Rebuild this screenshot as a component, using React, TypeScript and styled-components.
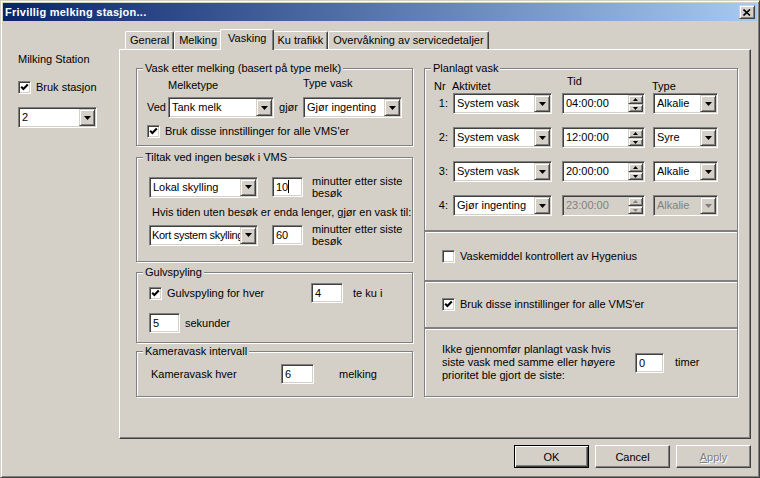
import React from "react";
import styled, { createGlobalStyle, css } from "styled-components";

const face = "#D4D0C8";
const shadow = "#808080";
const dark = "#404040";

const GlobalStyle = createGlobalStyle`
  html, body {
    margin: 0;
    padding: 0;
    background: ${face};
  }
  body {
    font-family: "Liberation Sans", Arial, sans-serif;
    font-size: 11px;
    color: #000;
  }
  * {
    box-sizing: border-box;
  }
`;

const raised = css`
  border: 1px solid;
  border-color: ${face} ${dark} ${dark} ${face};
  box-shadow: inset 1px 1px 0 #fff, inset -1px -1px 0 ${shadow};
  background: ${face};
`;

const sunken = css`
  border: 1px solid;
  border-color: ${shadow} #fff #fff ${shadow};
  box-shadow: inset 1px 1px 0 ${dark}, inset -1px -1px 0 ${face};
`;

const etched = css`
  border: 1px solid ${shadow};
  box-shadow: inset 1px 1px 0 #fff, 1px 1px 0 #fff;
`;

const Window = styled.div`
  width: 760px;
  height: 478px;
  background: ${face};
  border: 1px solid;
  border-color: ${face} ${dark} ${dark} ${face};
  box-shadow: inset 1px 1px 0 #fff, inset -1px -1px 0 ${shadow};
  padding: 2px;
  display: flex;
  flex-direction: column;
`;

const TitleBar = styled.div`
  height: 18px;
  display: flex;
  align-items: center;
  justify-content: space-between;
  padding: 0 2px;
  background: linear-gradient(90deg, #0a246a, #a6caf0);
`;

const Title = styled.span`
  color: #fff;
  font-weight: bold;
  letter-spacing: 0.25px;
`;

const CloseButton = styled.span`
  ${raised};
  width: 16px;
  height: 14px;
  display: flex;
  align-items: center;
  justify-content: center;
`;

const Body = styled.div`
  flex: 1;
  display: flex;
  flex-direction: column;
  padding: 8px 6px 0 15px;
`;

const MainRow = styled.div`
  display: flex;
  align-items: flex-start;
`;

const SideColumn = styled.div`
  width: 101px;
  padding-top: 24px;
  display: flex;
  flex-direction: column;
  align-items: flex-start;
`;

const Text = styled.span`
  line-height: 13px;
  white-space: nowrap;
`;

const CheckLabel = styled.label<{ $mt?: number }>`
  display: flex;
  align-items: center;
  gap: 5px;
  margin-top: ${(p) => p.$mt ?? 0}px;
  line-height: 13px;
  white-space: nowrap;
`;

const Box = styled.span`
  ${sunken};
  width: 13px;
  height: 13px;
  background: #fff;
  display: inline-flex;
  align-items: center;
  justify-content: center;
  flex-shrink: 0;
`;

const TabControl = styled.div`
  width: 632px;
  display: flex;
  flex-direction: column;
`;

const TabStrip = styled.div`
  height: 20px;
  display: flex;
  align-items: flex-end;
  padding-left: 6px;
`;

const Tab = styled.div<{ $active?: boolean }>`
  position: relative;
  z-index: ${(p) => (p.$active ? 1 : 0)};
  height: ${(p) => (p.$active ? 21 : 18)}px;
  padding: 0 ${(p) => (p.$active ? 7 : 4)}px;
  margin: 0 ${(p) => (p.$active ? -2 : 0)}px ${(p) => (p.$active ? -1 : 0)}px;
  background: ${face};
  border-top: 1px solid #fff;
  border-left: 1px solid #fff;
  border-right: 1px solid ${dark};
  border-radius: 2px 2px 0 0;
  box-shadow: inset -1px 0 0 ${shadow};
  line-height: 16px;
  white-space: nowrap;
`;

const TabPanel = styled.div`
  height: 390px;
  border: 1px solid;
  border-color: #fff ${dark} ${dark} #fff;
  box-shadow: inset -1px -1px 0 ${shadow};
  padding: 12px 0 0 16px;
  display: flex;
  gap: 11px;
`;

const Column = styled.div<{ $w: number }>`
  width: ${(p) => p.$w}px;
  display: flex;
  flex-direction: column;
`;

const GroupBox = styled.fieldset<{ $h: number; $mt?: number }>`
  margin: ${(p) => p.$mt ?? 0}px 0 0;
  padding: 0;
  min-width: 0;
  height: ${(p) => p.$h}px;
  ${etched};
`;

const Caption = styled.legend`
  margin-left: 6px;
  padding: 0 2px;
  line-height: 13px;
  background: ${face};
  white-space: nowrap;
`;

const PlainBox = styled.div<{ $h: number }>`
  height: ${(p) => p.$h}px;
  ${etched};
  display: flex;
  align-items: center;
  padding-left: 17px;
`;

const Inner = styled.div<{ $pt: number; $pl: number }>`
  padding: ${(p) => p.$pt}px 0 0 ${(p) => p.$pl}px;
`;

const TypeGrid = styled.div`
  display: grid;
  grid-template-columns: 21px 106px 29px 99px;
  grid-template-rows: 15px 21px;
  row-gap: 5px;
  align-items: center;
`;

const HeadLabel = styled.span<{ $col: number; $top?: boolean; $shift?: number }>`
  grid-column: ${(p) => p.$col};
  align-self: ${(p) => (p.$top ? "start" : "end")};
  margin-left: ${(p) => p.$shift ?? 0}px;
  line-height: 13px;
  white-space: nowrap;
`;

const Centered = styled.span`
  justify-self: center;
  line-height: 13px;
`;

const Row = styled.div<{ $mt?: number }>`
  display: flex;
  align-items: center;
  margin-top: ${(p) => p.$mt ?? 0}px;
`;

const Spaced = styled.span<{ $ml?: number; $w?: number }>`
  margin-left: ${(p) => p.$ml ?? 0}px;
  width: ${(p) => (p.$w ? `${p.$w}px` : "auto")};
  flex-shrink: 0;
  line-height: 13px;
  white-space: nowrap;
`;

const Note = styled.span<{ $ml: number; $w: number; $lh?: number }>`
  margin-left: ${(p) => p.$ml}px;
  width: ${(p) => p.$w}px;
  line-height: ${(p) => p.$lh ?? 12}px;
`;

const ComboBox = styled.div<{ $w: number; $disabled?: boolean }>`
  ${sunken};
  width: ${(p) => p.$w}px;
  height: 21px;
  padding: 1px;
  display: flex;
  align-items: center;
  flex-shrink: 0;
  background: ${(p) => (p.$disabled ? face : "#fff")};
  color: ${(p) => (p.$disabled ? shadow : "#000")};
`;

const ComboText = styled.span<{ $tight?: boolean }>`
  flex: 1;
  min-width: 0;
  padding-left: ${(p) => (p.$tight ? 1 : 2)}px;
  letter-spacing: ${(p) => (p.$tight ? "-0.3px" : "0")};
  overflow: hidden;
  white-space: nowrap;
  text-overflow: clip;
  line-height: 17px;
`;

const ArrowButton = styled.span`
  ${raised};
  width: 16px;
  height: 17px;
  flex-shrink: 0;
  display: flex;
  align-items: center;
  justify-content: center;
`;

const Edit = styled.div<{ $w: number }>`
  ${sunken};
  width: ${(p) => p.$w}px;
  height: 20px;
  flex-shrink: 0;
  background: #fff;
  padding: 0 3px;
  line-height: 18px;
  white-space: nowrap;
`;

const Caret = styled.span`
  display: inline-block;
  width: 1px;
  height: 13px;
  background: #000;
  vertical-align: -2px;
`;

const SpinBox = styled.div<{ $disabled?: boolean }>`
  ${sunken};
  width: 83px;
  height: 21px;
  padding: 1px;
  display: flex;
  background: ${(p) => (p.$disabled ? face : "#fff")};
  color: ${(p) => (p.$disabled ? shadow : "#000")};
`;

const SpinButtons = styled.div`
  width: 15px;
  display: flex;
  flex-direction: column;
`;

const SpinButton = styled.span<{ $h: number }>`
  ${raised};
  height: ${(p) => p.$h}px;
  display: flex;
  align-items: center;
  justify-content: center;
`;

const HeaderGrid = styled.div`
  display: grid;
  grid-template-columns: 19px 109px 91px 65px;
  height: 18px;
`;

const ScheduleGrid = styled.div`
  display: grid;
  grid-template-columns: 19px 109px 91px 65px;
  grid-auto-rows: 21px;
  row-gap: 13px;
  align-items: center;
`;

const RowNumber = styled.span`
  justify-self: end;
  padding-right: 5px;
  line-height: 13px;
`;

const ButtonRow = styled.div`
  display: flex;
  justify-content: flex-end;
  gap: 6px;
  margin-top: 6px;
`;

const PushButton = styled.button<{ $default?: boolean }>`
  width: 75px;
  height: 23px;
  padding: 0;
  font: inherit;
  color: #000;
  background: ${face};
  border: 1px solid;
  border-color: #fff ${dark} ${dark} #fff;
  box-shadow: inset -1px -1px 0 ${shadow}, inset 1px 1px 0 ${face};
  ${(p) =>
    p.$default &&
    css`
      border-color: #000;
      box-shadow: inset 1px 1px 0 #fff, inset -1px -1px 0 ${dark}, inset -2px -2px 0 ${shadow};
    `}
  &:disabled {
    color: ${shadow};
    text-shadow: 1px 1px 0 #fff;
  }
`;

function CheckMark() {
  return (
    <svg width="9" height="9" viewBox="0 0 9 9">
      <polyline points="1.2,3.8 3.4,6 7.8,1.6" fill="none" stroke="#000" strokeWidth="2.1" />
    </svg>
  );
}

function Check({ checked, label, mt }: { checked?: boolean; label: string; mt?: number }) {
  return (
    <CheckLabel $mt={mt}>
      <Box>{checked && <CheckMark />}</Box>
      {label}
    </CheckLabel>
  );
}

function DownArrow({ disabled }: { disabled?: boolean }) {
  return (
    <svg width="7" height="4" viewBox="0 0 7 4">
      <polygon points="0,0 7,0 3.5,4" fill={disabled ? shadow : "#000"} />
    </svg>
  );
}

function Combo({ w, value, disabled, tight }: { w: number; value: string; disabled?: boolean; tight?: boolean }) {
  return (
    <ComboBox $w={w} $disabled={disabled}>
      <ComboText $tight={tight}>{value}</ComboText>
      <ArrowButton>
        <DownArrow disabled={disabled} />
      </ArrowButton>
    </ComboBox>
  );
}

function Spin({ value, disabled }: { value: string; disabled?: boolean }) {
  const c = disabled ? shadow : "#000";
  return (
    <SpinBox $disabled={disabled}>
      <ComboText>{value}</ComboText>
      <SpinButtons>
        <SpinButton $h={9}>
          <svg width="5" height="3" viewBox="0 0 5 3">
            <polygon points="0,3 5,3 2.5,0" fill={c} />
          </svg>
        </SpinButton>
        <SpinButton $h={8}>
          <svg width="5" height="3" viewBox="0 0 5 3">
            <polygon points="0,0 5,0 2.5,3" fill={c} />
          </svg>
        </SpinButton>
      </SpinButtons>
    </SpinBox>
  );
}

const schedule = [
  { nr: "1:", act: "System vask", time: "04:00:00", type: "Alkalie" },
  { nr: "2:", act: "System vask", time: "12:00:00", type: "Syre" },
  { nr: "3:", act: "System vask", time: "20:00:00", type: "Alkalie" },
  { nr: "4:", act: "Gjør ingenting", time: "23:00:00", type: "Alkalie", disabled: true },
];

const tabs = ["General", "Melking", "Vasking", "Ku trafikk", "Overvåkning av servicedetaljer"];

export default function App() {
  return (
    <>
      <GlobalStyle />
      <Window>
        <TitleBar>
          <Title>Frivillig melking stasjon...</Title>
          <CloseButton>
            <svg width="8" height="7" viewBox="0 0 8 7">
              <path d="M0.5 0.5 L7 6.5 M7 0.5 L0.5 6.5" stroke="#000" strokeWidth="1.6" />
            </svg>
          </CloseButton>
        </TitleBar>
        <Body>
          <MainRow>
            <SideColumn>
              <Text>Milking Station</Text>
              <Check checked label="Bruk stasjon" mt={15} />
              <Row $mt={13}>
                <Combo w={79} value="2" />
              </Row>
            </SideColumn>
            <TabControl>
              <TabStrip>
                {tabs.map((t) => (
                  <Tab key={t} $active={t === "Vasking"}>
                    {t}
                  </Tab>
                ))}
              </TabStrip>
              <TabPanel>
                <Column $w={277}>
                  <GroupBox $h={84}>
                    <Caption>Vask etter melking (basert på type melk)</Caption>
                    <Inner $pt={2} $pl={10}>
                      <TypeGrid>
                        <HeadLabel $col={2}>Melketype</HeadLabel>
                        <HeadLabel $col={4} $top>
                          Type vask
                        </HeadLabel>
                        <Text>Ved</Text>
                        <Combo w={106} value="Tank melk" />
                        <Centered>gjør</Centered>
                        <Combo w={99} value="Gjør ingenting" />
                      </TypeGrid>
                      <Check checked label="Bruk disse innstillinger for alle VMS'er" mt={7} />
                    </Inner>
                  </GroupBox>
                  <GroupBox $h={111} $mt={5}>
                    <Caption>Tiltak ved ingen besøk i VMS</Caption>
                    <Inner $pt={11} $pl={12}>
                      <Row>
                        <Combo w={109} value="Lokal skylling" />
                        <Spaced $ml={14}>
                          <Edit $w={31}>
                            10
                            <Caret />
                          </Edit>
                        </Spaced>
                        <Note $ml={9} $w={98}>
                          minutter etter siste besøk
                        </Note>
                      </Row>
                      <Row $mt={7}>
                        <Spaced $ml={3}>Hvis tiden uten besøk er enda lenger, gjør en vask til:</Spaced>
                      </Row>
                      <Row $mt={4}>
                        <Combo w={109} value="Kort system skylling" tight />
                        <Spaced $ml={14}>
                          <Edit $w={31}>60</Edit>
                        </Spaced>
                        <Note $ml={9} $w={98}>
                          minutter etter siste besøk
                        </Note>
                      </Row>
                    </Inner>
                  </GroupBox>
                  <GroupBox $h={77} $mt={4}>
                    <Caption>Gulvspyling</Caption>
                    <Inner $pt={4} $pl={12}>
                      <Row>
                        <Spaced $w={162}>
                          <Check checked label="Gulvspyling for hver" />
                        </Spaced>
                        <Edit $w={32}>4</Edit>
                        <Spaced $ml={10}>te ku i</Spaced>
                      </Row>
                      <Row $mt={10}>
                        <Edit $w={31}>5</Edit>
                        <Spaced $ml={5}>sekunder</Spaced>
                      </Row>
                    </Inner>
                  </GroupBox>
                  <GroupBox $h={52} $mt={2}>
                    <Caption>Kameravask intervall</Caption>
                    <Inner $pt={6} $pl={14}>
                      <Row>
                        <Spaced $w={130}>Kameravask hver</Spaced>
                        <Edit $w={33}>6</Edit>
                        <Spaced $ml={25}>melking</Spaced>
                      </Row>
                    </Inner>
                  </GroupBox>
                </Column>
                <Column $w={314}>
                  <GroupBox $h={169}>
                    <Caption>Planlagt vask</Caption>
                    <Inner $pt={0} $pl={9}>
                      <HeaderGrid>
                        <HeadLabel $col={1}>Nr</HeadLabel>
                        <HeadLabel $col={2} $shift={-1}>
                          Aktivitet
                        </HeadLabel>
                        <HeadLabel $col={3} $top $shift={5}>
                          Tid
                        </HeadLabel>
                        <HeadLabel $col={4} $shift={-1}>
                          Type
                        </HeadLabel>
                      </HeaderGrid>
                      <ScheduleGrid>
                        {schedule.map((s) => (
                          <React.Fragment key={s.nr}>
                            <RowNumber>{s.nr}</RowNumber>
                            <Combo w={99} value={s.act} />
                            <Spin value={s.time} disabled={s.disabled} />
                            <Combo w={65} value={s.type} disabled={s.disabled} />
                          </React.Fragment>
                        ))}
                      </ScheduleGrid>
                    </Inner>
                  </GroupBox>
                  <PlainBox $h={50}>
                    <Check label="Vaskemiddel kontrollert av Hygenius" />
                  </PlainBox>
                  <PlainBox $h={47}>
                    <Check checked label="Bruk disse innstillinger for alle VMS'er" />
                  </PlainBox>
                  <PlainBox $h={69}>
                    <Note $ml={0} $w={185} $lh={13}>
                      Ikke gjennomfør planlagt vask hvis siste vask med samme eller høyere prioritet ble gjort de siste:
                    </Note>
                    <Spaced $ml={8}>
                      <Edit $w={29}>0</Edit>
                    </Spaced>
                    <Spaced $ml={11}>timer</Spaced>
                  </PlainBox>
                </Column>
              </TabPanel>
            </TabControl>
          </MainRow>
          <ButtonRow>
            <PushButton $default>OK</PushButton>
            <PushButton>Cancel</PushButton>
            <PushButton disabled>
              <u>A</u>pply
            </PushButton>
          </ButtonRow>
        </Body>
      </Window>
    </>
  );
}
